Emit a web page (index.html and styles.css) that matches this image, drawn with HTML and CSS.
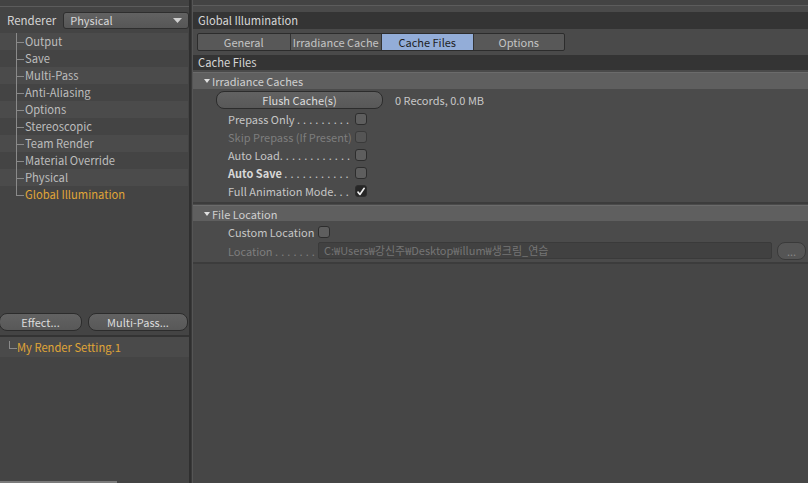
FILE: index.html
```html
<!DOCTYPE html>
<html>
<head>
<meta charset="utf-8">
<link rel="stylesheet" href="styles.css">
</head>
<body>
<div class="app">
  <aside class="left">
    <div class="top-strip"></div>
    <div class="renderer-row">
      <span class="renderer-label">Renderer</span>
      <div class="select">
        <span>Physical</span>
        <svg class="select-arrow" width="9" height="5" viewBox="0 0 9 5"><path d="M0 0H9L4.5 5Z" fill="#d0d0d0"/></svg>
      </div>
    </div>
    <ul class="tree">
      <li class="tree-row">Output</li>
      <li class="tree-row">Save</li>
      <li class="tree-row">Multi-Pass</li>
      <li class="tree-row">Anti-Aliasing</li>
      <li class="tree-row">Options</li>
      <li class="tree-row">Stereoscopic</li>
      <li class="tree-row">Team Render</li>
      <li class="tree-row">Material Override</li>
      <li class="tree-row">Physical</li>
      <li class="tree-row tree-last active">Global Illumination</li>
    </ul>
    <div class="left-fill"></div>
    <div class="btn-row">
      <button class="pill btn-effect">Effect...</button>
      <button class="pill btn-multi">Multi-Pass...</button>
    </div>
    <div class="setting-list">
      <div class="setting-row">My Render Setting.1</div>
    </div>
    <div class="left-bottom"><div class="scroll-line"></div></div>
  </aside>
  <div class="divider"></div>
  <main class="right">
    <div class="top-strip"></div>
    <div class="section-header first-header">Global Illumination</div>
    <div class="tabs-row">
      <div class="tabs">
        <div class="tab">General</div>
        <div class="tab">Irradiance Cache</div>
        <div class="tab tab-active">Cache Files</div>
        <div class="tab">Options</div>
      </div>
    </div>
    <div class="section-header">Cache Files</div>
    <section class="group group-first">
      <div class="group-header"><span class="tri"></span>Irradiance Caches</div>
      <div class="group-body body-cache">
        <div class="flush-row">
          <button class="pill flush">Flush Cache(s)</button>
          <span class="records">0 Records, 0.0 MB</span>
        </div>
        <div class="prop"><span class="prop-label">Prepass Only <span class="dots">. . . . . . . . .</span></span><span class="check"></span></div>
        <div class="prop disabled"><span class="prop-label">Skip Prepass (If Present)</span><span class="check"></span></div>
        <div class="prop"><span class="prop-label">Auto Load<span class="dots">. . . . . . . . . . . .</span></span><span class="check"></span></div>
        <div class="prop"><span class="prop-label"><b>Auto Save</b> <span class="dots">. . . . . . . . . . .</span></span><span class="check"></span></div>
        <div class="prop"><span class="prop-label">Full Animation Mode<span class="dots">. . .</span></span><span class="check checked"><svg width="11" height="11" viewBox="0 0 11 11"><path d="M2.2 6.2 L4.3 8.8 L9 2" fill="none" stroke="#f0f0f0" stroke-width="1.8" stroke-linecap="round" stroke-linejoin="round"/></svg></span></div>
      </div>
    </section>
    <section class="group">
      <div class="group-header"><span class="tri"></span>File Location</div>
      <div class="group-body body-loc">
        <div class="prop loc-prop"><span class="prop-label">Custom Location</span><span class="check"></span></div>
        <div class="prop loc-prop disabled">
          <span class="prop-label">Location <span class="dots">. . . . . . . .</span></span>
          <div class="path-input">C:₩Users₩강신주₩Desktop₩illum₩생크림_연습</div>
          <button class="pill dots-btn">...</button>
        </div>
      </div>
    </section>
    <div class="right-fill"></div>
  </main>
</div>
</body>
</html>
```

FILE: styles.css
```css
* { box-sizing: border-box; }
html, body { margin: 0; padding: 0; }
body {
  width: 808px;
  height: 483px;
  overflow: hidden;
  background: #454545;
  font-family: "Noto Sans CJK KR", "Noto Sans", sans-serif;
  font-size: 11px;
  color: #c8c8c8;
}
.app {
  display: flex;
  height: 483px;
}
.left {
  width: 189px;
  display: flex;
  flex-direction: column;
  background: #444;
}
.top-strip {
  height: 7px;
  border-bottom: 1px solid #5c5c5c;
  background: #434343;
  flex: none;
}
.renderer-row {
  height: 26px;
  display: flex;
  align-items: center;
  padding-left: 7px;
  gap: 7px;
  flex: none;
}
.renderer-label { color: #d4d4d4; line-height: 14px; font-size: 11.5px; }
.select {
  width: 126px;
  height: 17px;
  border: 1px solid #2e2e2e;
  border-radius: 3px;
  background: linear-gradient(#626262, #565656);
  display: flex;
  align-items: center;
  justify-content: space-between;
  padding: 0 6px 0 6px;
  color: #d8d8d8;
  line-height: 14px;
}
.select-arrow { display: block; }
.tree {
  list-style: none;
  margin: 0;
  padding: 0;
  flex: none;
}
.tree-row {
  position: relative;
  height: 17px;
  line-height: 17px;
  padding-left: 25px;
  color: #bdbdbd;
  width: 188px;
  font-size: 11.2px;
}
.tree-row:nth-child(odd) { background: #4b4b4b; }
.tree-row::before {
  content: "";
  position: absolute;
  left: 16px;
  top: 0;
  height: 17px;
  border-left: 1px solid #8a8a8a;
}
.tree-row::after {
  content: "";
  position: absolute;
  left: 16px;
  top: 9px;
  width: 8px;
  border-top: 1px solid #8a8a8a;
}
.tree-last::before { height: 9px; }
.tree-row.active { color: #e0a637; }
.left-fill { flex: 1; }
.btn-row {
  display: flex;
  gap: 6px;
  height: 21px;
  align-items: center;
  padding-right: 1px;
  flex: none;
}
.pill {
  font: inherit;
  height: 18px;
  border: 1px solid #2c2c2c;
  border-radius: 8px;
  background: linear-gradient(#626262, #585858);
  color: #dcdcdc;
  padding: 0;
  line-height: 14px;
  white-space: nowrap;
}
.btn-effect { width: 83px; margin-left: -1px; }
.btn-multi { flex: 1; }
.setting-list {
  border-top: 2px solid #333;
  margin-top: 3px;
  flex: none;
}
.setting-row {
  position: relative;
  height: 20px;
  line-height: 20px;
  padding-left: 17px;
  color: #e0a637;
  background: #4a4a4a;
  font-size: 11.2px;
}
.setting-row::before {
  content: "";
  position: absolute;
  left: 9px;
  top: 4px;
  width: 7px;
  height: 7px;
  border-left: 1px solid #8a8a8a;
  border-bottom: 1px solid #8a8a8a;
}
.left-bottom {
  height: 126px;
  flex: none;
  display: flex;
  align-items: flex-end;
}
.scroll-line {
  width: 117px;
  height: 2px;
  background: #7a7a7a;
}
.divider {
  width: 4px;
  background: #3a3a3a;
  border-left: 2px solid #2f2f2f;
  border-right: 1px solid #555;
}
.right {
  flex: 1;
  display: flex;
  flex-direction: column;
  background: #4a4a4a;
}
.right .top-strip { height: 6px; }
.section-header {
  height: 15px;
  line-height: 15px;
  background: #343434;
  color: #d6d6d6;
  padding-left: 5px;
  flex: none;
  font-size: 11.2px;
}
.first-header {
  margin-top: 6px;
  height: 17px;
  line-height: 17px;
}
.tabs-row {
  height: 26px;
  padding: 4px 0 0 4px;
  flex: none;
}
.tabs {
  display: flex;
  width: 368px;
  height: 18px;
  border: 1px solid #2c2c2c;
  border-radius: 2px;
  background: #585858;
}
.tab {
  width: 92px;
  text-align: center;
  line-height: 16px;
  color: #c4c4c4;
  border-left: 1px solid #333;
  white-space: nowrap;
}
.tab:first-child { border-left: none; }
.tab-active {
  background: #93add8;
  color: #1e1e1e;
}
.group { flex: none; }
.group-header {
  height: 16px;
  line-height: 16px;
  background: #5f5f5f;
  border-top: 1px solid #6b6b6b;
  margin-top: 1px;
  padding-left: 11px;
  color: #d0d0d0;
  display: flex;
  align-items: center;
}
.group-first .group-header { margin-top: 2px; height: 17px; }
.tri {
  width: 0;
  height: 0;
  border-left: 3.5px solid transparent;
  border-right: 3.5px solid transparent;
  border-top: 4px solid #e0e0e0;
  margin-right: 2px;
}
.group-body {
  background: #4b4b4b;
  padding-left: 35px;
  border-bottom: 2px solid #3c3c3c;
}
.body-cache { padding-top: 2px; padding-bottom: 2px; }
.flush-row {
  display: flex;
  align-items: center;
  height: 18px;
  margin-left: -12px;
  margin-bottom: 1px;
}
.flush { width: 167px; height: 18px; }
.records { margin-left: 12px; color: #c8c8c8; }
.prop {
  display: flex;
  align-items: center;
  height: 18px;
  color: #c6c6c6;
}
.prop-label { width: 127px; white-space: nowrap; }
.dots { letter-spacing: 0.3px; }
.prop-label b { font-weight: bold; color: #d8d8d8; }
.prop.disabled { color: #7e7e7e; }
.check {
  width: 12px;
  height: 12px;
  border: 1px solid #2d2d2d;
  border-radius: 3px;
  background: #5e5e5e;
  display: flex;
  align-items: center;
  justify-content: center;
}
.prop.disabled .check { background: #555; border-color: #3a3a3a; }
.check.checked { background: #262626; }
.check svg { display: block; }
.body-loc { padding-top: 1px; padding-bottom: 2px; }
.loc-prop { height: 19px; }
.loc-prop .prop-label { width: 90px; }
.path-input {
  width: 454px;
  height: 17px;
  background: #414141;
  border: 1px solid #3a3a3a;
  border-radius: 2px;
  color: #757575;
  line-height: 15px;
  padding-left: 5px;
}
.dots-btn {
  width: 29px;
  height: 18px;
  margin-left: 5px;
  background: #555;
  color: #888;
  border-color: #3a3a3a;
}
.right-fill { flex: 1; background: #464646; }
```
